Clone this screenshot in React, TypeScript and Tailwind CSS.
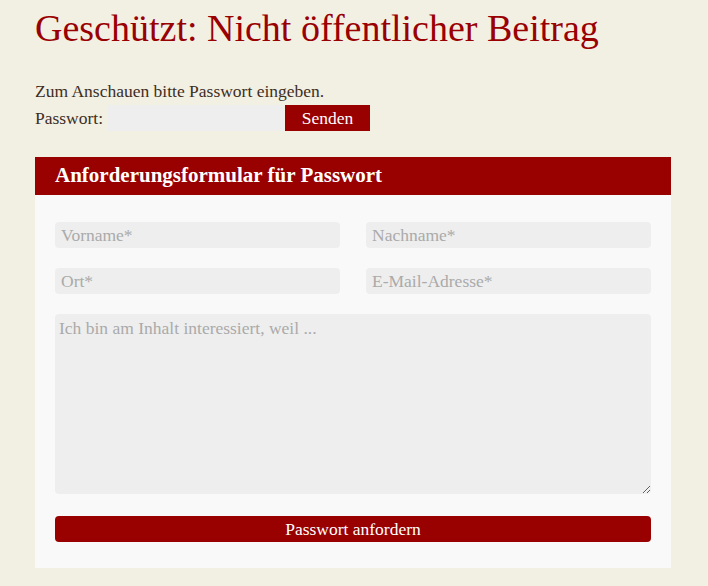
export default function App() {
  return (
    <div className="min-h-[586px] bg-[#f2efe3] px-[35px] pt-[6px] pb-[18px] font-['Liberation_Serif',serif] text-[#3d2e1e]">
      <h1 className="text-[38px] leading-[44px] text-[#990000]">Geschützt: Nicht öffentlicher Beitrag</h1>
      <form className="mt-[29px]">
        <p className="text-[17.5px] leading-[24px]">Zum Anschauen bitte Passwort eingeben.</p>
        <div className="mt-[2px] flex items-center">
          <label className="text-[17.5px] leading-[26px]">Passwort:</label>
          <input type="password" className="ml-[5px] h-[26px] w-[175px] bg-[#eeeeee] outline-none" />
          <button type="button" className="ml-[2px] h-[26px] w-[85px] bg-[#990000] text-[17.5px] text-white">Senden</button>
        </div>
      </form>
      <div className="mt-[26px] w-[636px] bg-[#f9f9f9]">
        <div className="flex h-[38px] items-center bg-[#990000] px-[20px] text-[21px] font-bold text-white">
          Anforderungsformular für Passwort
        </div>
        <div className="flex flex-col gap-[20px] px-[20px] pt-[27px] pb-[26px]">
          <div className="grid grid-cols-2 gap-[26px]">
            <input placeholder="Vorname*" className="h-[26px] rounded-[4px] bg-[#eeeeee] px-[6px] text-[17.5px] outline-none placeholder:text-[#aaaaaa]" />
            <input placeholder="Nachname*" className="h-[26px] rounded-[4px] bg-[#eeeeee] px-[6px] text-[17.5px] outline-none placeholder:text-[#aaaaaa]" />
          </div>
          <div className="grid grid-cols-2 gap-[26px]">
            <input placeholder="Ort*" className="h-[26px] rounded-[4px] bg-[#eeeeee] px-[6px] text-[17.5px] outline-none placeholder:text-[#aaaaaa]" />
            <input placeholder="E-Mail-Adresse*" className="h-[26px] rounded-[4px] bg-[#eeeeee] px-[6px] text-[17.5px] outline-none placeholder:text-[#aaaaaa]" />
          </div>
          <textarea placeholder="Ich bin am Inhalt interessiert, weil ..." className="block h-[180px] rounded-[4px] bg-[#eeeeee] px-[4px] py-[2px] text-[17.5px] leading-[24px] outline-none placeholder:text-[#aaaaaa]" />
          <button type="button" className="mt-[2px] h-[26px] rounded-[4px] bg-[#990000] text-[17.5px] text-white">Passwort anfordern</button>
        </div>
      </div>
    </div>
  );
}
